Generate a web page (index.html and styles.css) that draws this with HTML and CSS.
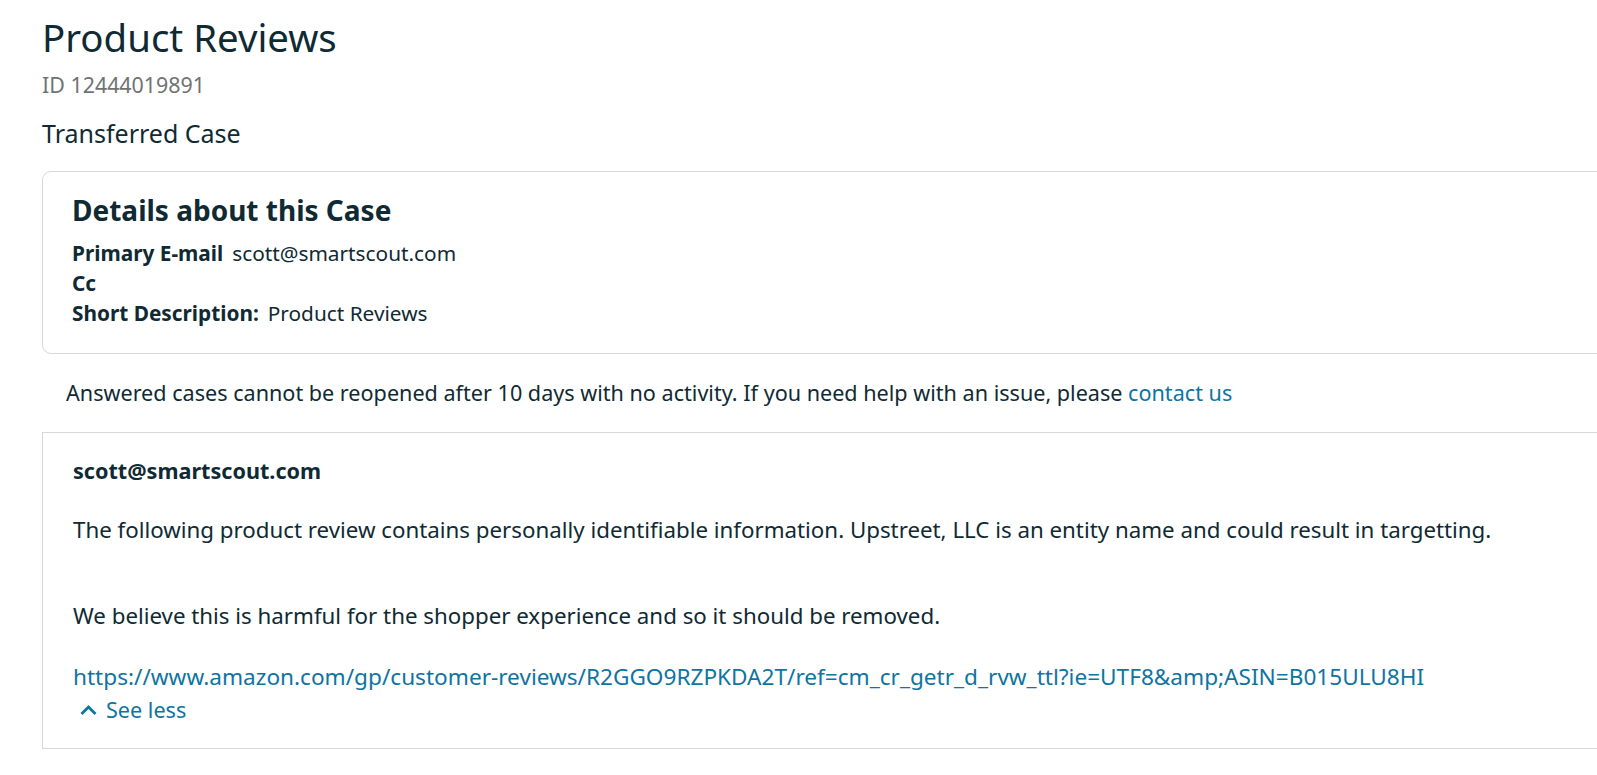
FILE: index.html
```html
<!DOCTYPE html>
<html lang="en">
<head>
    <meta charset="UTF-8">
    <title>Product Reviews</title>
    <link rel="stylesheet" href="styles.css">
</head>
<body>
    <div id="page">
        <h1 class="title">Product Reviews</h1>
        <div class="case-id">ID 12444019891</div>
        <div class="case-status">Transferred Case</div>

        <div class="card details">
            <h2>Details about this Case</h2>
            <div class="row"><b>Primary E-mail</b><span>scott@smartscout.com</span></div>
            <div class="row"><b>Cc</b></div>
            <div class="row"><b>Short Description:</b><span>Product Reviews</span></div>
        </div>

        <p class="notice">Answered cases cannot be reopened after 10 days with no activity. If you need help with an issue, please <a href="#">contact us</a></p>

        <div class="card message">
            <div class="sender">scott@smartscout.com</div>
            <p class="first">The following product review contains personally identifiable information. Upstreet, LLC is an entity name and could result in targetting.</p>
            <p class="gap">We believe this is harmful for the shopper experience and so it should be removed.</p>
            <p class="url"><a href="#">https://www.amazon.com/gp/customer-reviews/R2GGO9RZPKDA2T/ref=cm_cr_getr_d_rvw_ttl?ie=UTF8&amp;amp;ASIN=B015ULU8HI</a></p>
            <a class="see-less" href="#">
                <svg width="17" height="10" viewBox="0 0 17 10"><path d="M1.5 9 L8.5 2 L15.5 9" fill="none" stroke="currentColor" stroke-width="2.8"/></svg>
                See less
            </a>
        </div>
    </div>
</body>
</html>
```

FILE: styles.css
```css
/* page */
body {
    margin: 0;
    background-color: #fff;
    font-family: "Noto Sans", "Open Sans", sans-serif;
    color: #0f2a33;
    overflow: hidden;
}

#page {
    padding: 15px 0 0 42px;
}

a {
    color: #0e74a1;
    text-decoration: none;
}

.title {
    margin: 0;
    font-size: 38.4px;
    font-weight: normal;
    line-height: 44px;
}

.case-id {
    margin-top: 11px;
    font-size: 21.4px;
    line-height: 30px;
    color: #6f7373;
}

.case-status {
    margin-top: 17px;
    font-size: 25px;
    line-height: 32px;
}

/* cards */
.card {
    width: 1600px;
    border: 1px solid #d5d9d9;
    background-color: #fff;
}

.details {
    margin-top: 22px;
    border-radius: 9px;
    padding: 21px 29px 25px;
}

.details h2 {
    margin: 0 0 11px;
    font-size: 28px;
    line-height: 34px;
}

.row {
    font-size: 20.8px;
    line-height: 30px;
    display: flex;
    gap: 9px;
}

.notice {
    margin: 24px 0 0 24px;
    font-size: 21.6px;
    line-height: 30px;
}

.message {
    margin-top: 24px;
    padding: 23px 30px 23px;
}

.sender {
    font-size: 21.6px;
    font-weight: bold;
    line-height: 30px;
}

.message p {
    margin: 0;
    font-size: 22.3px;
    line-height: 30px;
}

.message p.first {
    margin-top: 29px;
}

.message p.gap {
    margin-top: 56px;
}

.message p.url {
    margin-top: 31px;
}

.message p.url a {
    font-size: 22.6px;
}

.see-less {
    display: flex;
    align-items: center;
    gap: 9px;
    margin: 3px 0 0 7px;
    font-size: 21.6px;
    line-height: 30px;
}
```
